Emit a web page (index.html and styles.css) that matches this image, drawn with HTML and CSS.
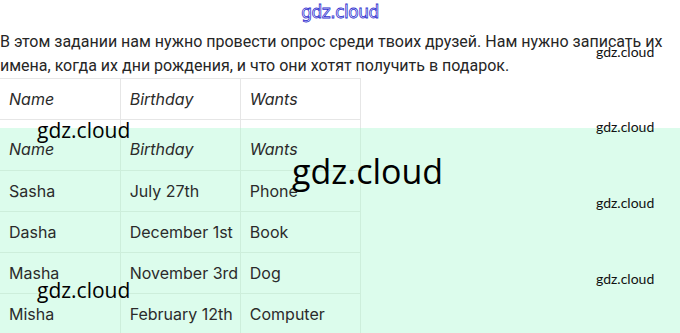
FILE: index.html
```html
<!DOCTYPE html>
<html lang="ru">
<head>
  <meta charset="UTF-8" />
  <meta name="viewport" content="width=device-width, initial-scale=1.0"/>
  <title>Опрос друзей</title>
  <link rel="stylesheet" href="styles.css">
</head>
<body>

  <div class="logo">gdz.cloud</div>

  <p class="task">В этом задании нам нужно провести опрос среди твоих друзей. Нам нужно записать их имена, когда их дни рождения, и что они хотят получить в подарок.</p>

  <!-- empty template, cut off under the answer -->
  <div class="template">
    <table class="grid">
      <tr class="head"><td>Name</td><td>Birthday</td><td>Wants</td></tr>
      <tr><td></td><td></td><td></td></tr>
    </table>
  </div>

  <!-- filled answer -->
  <div class="answer">
    <table class="grid">
      <tr class="head"><td>Name</td><td>Birthday</td><td>Wants</td></tr>
      <tr><td>Sasha</td><td>July 27th</td><td>Phone</td></tr>
      <tr><td>Dasha</td><td>December 1st</td><td>Book</td></tr>
      <tr><td>Masha</td><td>November 3rd</td><td>Dog</td></tr>
      <tr><td>Misha</td><td>February 12th</td><td>Computer</td></tr>
    </table>
  </div>

  <!-- watermarks -->
  <div class="mark mark-md" style="left: 37px; top: 116px;">gdz.cloud</div>
  <div class="mark mark-md" style="left: 37px; top: 276px;">gdz.cloud</div>
  <div class="mark mark-lg" style="left: 292px; top: 149px;">gdz.cloud</div>
  <div class="mark mark-sm" style="left: 596px; top: 43px;">gdz.cloud</div>
  <div class="mark mark-sm" style="left: 596px; top: 118px;">gdz.cloud</div>
  <div class="mark mark-sm" style="left: 596px; top: 194px;">gdz.cloud</div>
  <div class="mark mark-sm" style="left: 596px; top: 270px;">gdz.cloud</div>

</body>
</html>
```

FILE: styles.css
```css
* {
  box-sizing: border-box;
}

body {
  margin: 0;
  width: 680px;
  height: 333px;
  overflow: hidden;
  position: relative;
  background: #fff;
  font-family: Inter, "Noto Sans", sans-serif;
  color: #2b2b2b;
}

.logo {
  height: 24px;
  text-align: center;
  font-family: "DejaVu Sans", sans-serif;
  font-size: 17px;
  line-height: 24px;
  color: transparent;
  -webkit-text-stroke: 0.8px #2f2fd0;
  letter-spacing: -0.5px;
}

.task {
  margin: 6px 0 0;
  font-family: Roboto, "Noto Sans", sans-serif;
  font-size: 16px;
  line-height: 24px;
  color: #262626;
}

.template {
  height: 50px;
  overflow: hidden;
}

.answer {
  background: #dcfcec;
  height: 205px;
  overflow: hidden;
}

.grid {
  border-collapse: collapse;
  table-layout: fixed;
  width: 361px;
  font-size: 16px;
}

.grid td {
  width: 120px;
  height: 41px;
  padding: 0 9px;
  border: 1px solid #e6e6e6;
  border-top: none;
  vertical-align: middle;
  white-space: nowrap;
}

.template .grid {
  border-top: 1px solid #e6e6e6;
}

.grid td:first-child {
  border-left: none;
}

.answer .grid td {
  border-color: #cdeedb;
}

.answer .grid tr:first-child td {
  height: 42px;
}

.head td {
  font-style: italic;
}

.mark {
  position: absolute;
  color: #000;
  white-space: nowrap;
}

.mark-sm {
  font-family: Lato, sans-serif;
  font-size: 14px;
  line-height: 18px;
  color: #111;
}

.mark-md {
  font-family: "Open Sans", sans-serif;
  font-size: 21px;
  line-height: 28px;
}

.mark-lg {
  font-family: "Open Sans", sans-serif;
  font-size: 34px;
  line-height: 44px;
}
```
